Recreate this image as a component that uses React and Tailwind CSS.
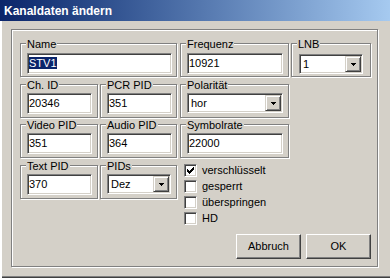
import React from 'react';

// Windows classic bevels
const etched = 'border border-[#808080] shadow-[inset_1px_1px_0_#fff,1px_1px_0_#fff]';
const sunken =
  'border border-t-[#808080] border-l-[#808080] border-r-white border-b-white shadow-[inset_1px_1px_0_#404040,inset_-1px_-1px_0_#d4d0c8]';
const raised =
  'border border-t-white border-l-white border-r-[#404040] border-b-[#404040] shadow-[inset_-1px_-1px_0_#808080]';
const raisedSoft =
  'border border-t-[#d4d0c8] border-l-[#d4d0c8] border-r-[#404040] border-b-[#404040] shadow-[inset_1px_1px_0_#fff,inset_-1px_-1px_0_#808080]';

const tick = [
  [6, 0], [5, 1], [6, 1], [0, 2], [4, 2], [5, 2], [6, 2],
  [0, 3], [1, 3], [3, 3], [4, 3], [5, 3], [0, 4], [1, 4], [2, 4], [3, 4], [4, 4],
  [1, 5], [2, 5], [3, 5], [2, 6],
];

const Group = ({ label, className = '', children }) => (
  <div className={`relative h-[34px] ${etched} ${className}`}>
    <span className="absolute left-[5px] -top-[6px] px-[1px] bg-[#d4d0c8] leading-[13px] whitespace-nowrap">
      {label}
    </span>
    {children}
  </div>
);

const Edit = ({ value, className = '', selected }) => (
  <div className={`${sunken} bg-white h-[21px] pl-[1px] pt-[3px] leading-[13px] ${className}`}>
    {selected ? <span className="bg-[#0a246a] text-white">{value}</span> : value}
  </div>
);

const Combo = ({ value, className = '' }) => (
  <div className={`${sunken} bg-white h-[20px] p-[1px] flex ${className}`}>
    <div className="flex-1 pl-[2px] leading-[16px]">{value}</div>
    <div className={`${raisedSoft} bg-[#d4d0c8] w-[16px] h-[16px] flex items-center justify-center`}>
      <svg width="5" height="3" viewBox="0 0 5 3" shapeRendering="crispEdges">
        <path d="M0 0h5v1h-1v1h-1v1h-1v-1h-1v-1h-1z" fill="#000" />
      </svg>
    </div>
  </div>
);

const Check = ({ label, checked }) => (
  <div className="flex items-center h-[13px]">
    <div className={`${sunken} bg-white w-[13px] h-[13px] flex items-center justify-center`}>
      {checked && (
        <svg width="7" height="7" viewBox="0 0 7 7" shapeRendering="crispEdges">
          {tick.map(([x, y]) => (
            <rect key={`${x}-${y}`} x={x} y={y} width="1" height="1" fill="#000" />
          ))}
        </svg>
      )}
    </div>
    <span className="ml-[5px] leading-[13px]">{label}</span>
  </div>
);

const Button = ({ children }) => (
  <button className={`${raised} bg-[#d4d0c8] w-[65px] h-[25px] leading-[13px] text-center`}>{children}</button>
);

export default function App() {
  return (
    <div className="w-[390px] h-[278px] bg-[#d4d0c8] overflow-hidden text-[11px] text-black font-['Liberation_Sans',Arial,sans-serif] shadow-[inset_2px_0_0_#fff,inset_0_-1px_0_#404040,inset_0_-2px_0_#808080]">
      {/* title bar */}
      <div className="h-[21px] bg-linear-to-r from-[#0a246a] to-[#a6caf0] pl-[4px] pt-[3px] leading-[16px] text-[12px] font-bold text-white">
        Kanaldaten ändern
      </div>

      {/* frame */}
      <div className={`ml-[11px] mt-[8px] w-[367px] h-[238px] ${etched} pl-[8px] pt-[13px]`}>
        <div className="flex">
          <Group label="Name" className="w-[157px]">
            <Edit value="STV1" selected className="mt-[9px] ml-[6px] w-[145px]" />
          </Group>
          <Group label="Frequenz" className="ml-[3px] w-[109px]">
            <Edit value="10921" className="mt-[9px] ml-[6px] w-[96px]" />
          </Group>
          <Group label="LNB" className="ml-[2px] w-[80px]">
            <Combo value="1" className="mt-[10px] ml-[7px] w-[64px]" />
          </Group>
        </div>

        <div className="flex mt-[7px]">
          <Group label="Ch. ID" className="w-[78px]">
            <Edit value="20346" className="mt-[8px] ml-[6px] w-[65px]" />
          </Group>
          <Group label="PCR PID" className="ml-[2px] w-[77px]">
            <Edit value="351" className="mt-[8px] ml-[6px] w-[65px]" />
          </Group>
          <Group label="Polarität" className="ml-[3px] w-[109px]">
            <Combo value="hor" className="mt-[8px] ml-[6px] w-[96px]" />
          </Group>
        </div>

        <div className="flex mt-[6px]">
          <Group label="Video PID" className="w-[78px]">
            <Edit value="351" className="mt-[8px] ml-[6px] w-[65px]" />
          </Group>
          <Group label="Audio PID" className="ml-[2px] w-[77px]">
            <Edit value="364" className="mt-[8px] ml-[6px] w-[65px]" />
          </Group>
          <Group label="Symbolrate" className="ml-[3px] w-[109px]">
            <Edit value="22000" className="mt-[8px] ml-[6px] w-[96px]" />
          </Group>
        </div>

        <div className="flex items-start">
          <div className="flex mt-[7px]">
            <Group label="Text PID" className="w-[78px]">
              <Edit value="370" className="mt-[8px] ml-[6px] w-[65px]" />
            </Group>
            <Group label="PIDs" className="ml-[2px] w-[77px]">
              <Combo value="Dez" className="mt-[8px] ml-[6px] w-[64px]" />
            </Group>
          </div>
          <div className="ml-[7px] mt-[6px] flex flex-col gap-[3px]">
            <Check label="verschlüsselt" checked />
            <Check label="gesperrt" />
            <Check label="überspringen" />
            <Check label="HD" />
          </div>
        </div>

        <div className="flex gap-[5px] pl-[216px] mt-[9px]">
          <Button>Abbruch</Button>
          <Button>OK</Button>
        </div>
      </div>
    </div>
  );
}
